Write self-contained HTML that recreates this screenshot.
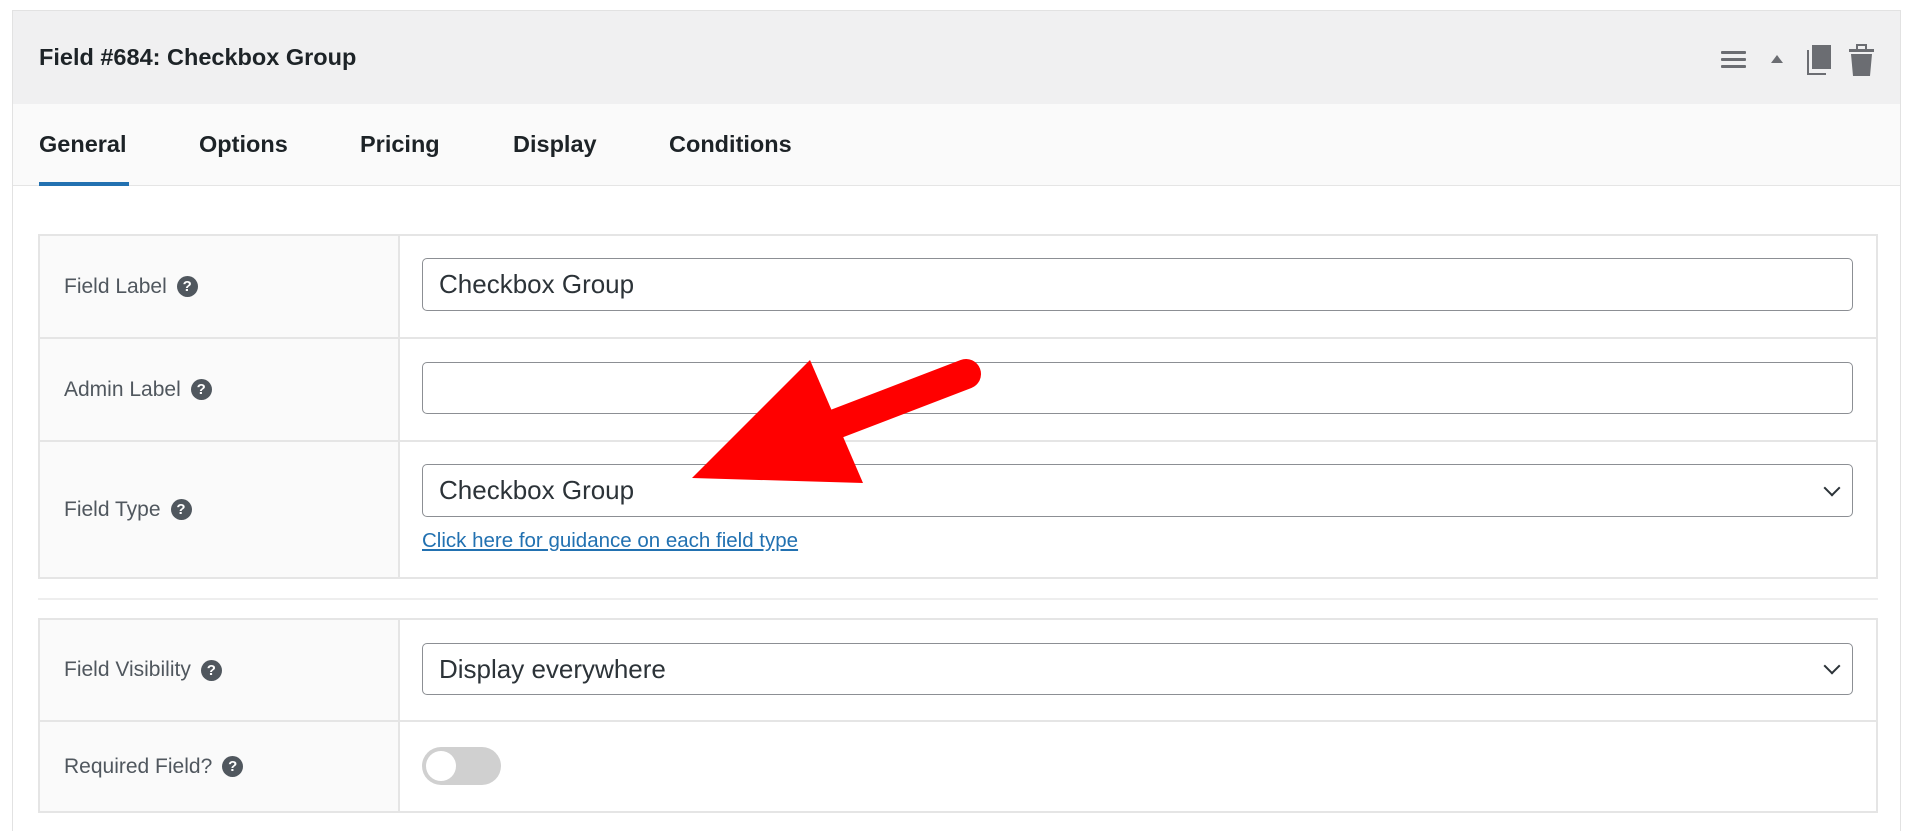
<!DOCTYPE html>
<html><head><style>
*{box-sizing:border-box;margin:0;padding:0}
html,body{width:1920px;height:831px;overflow:hidden}
body{background:#fff;font-family:"Liberation Sans",sans-serif;position:relative}
.panel{position:absolute;left:12px;top:10px;width:1889px;height:821px;border:1px solid #e2e2e2;border-bottom:none;background:#fff}
.hdr{position:absolute;left:0;top:0;width:100%;height:93px;background:#f0f0f1}
.title{position:absolute;left:26px;top:33px;font-size:23.5px;font-weight:bold;color:#1d2327}
.tabs{position:absolute;left:0;top:93px;width:100%;height:82px;background:#fafafa;border-bottom:1px solid #e5e5e5}
.tab{position:absolute;top:27px;font-size:23.5px;font-weight:bold;color:#1d2327}
.ul{position:absolute;left:26px;top:78px;width:90px;height:4px;background:#2271b1}
.tbl{position:absolute;left:38px;width:1840px;border:2px solid #e5e5e5;background:#fff}
.row{position:absolute;left:0;width:100%;border-top:2px solid #e5e5e5}
.lab{position:absolute;left:0;top:0;width:360px;height:100%;border-right:2px solid #e5e5e5;background:#fafafa;display:flex;align-items:center;padding-left:24px;font-size:21px;color:#50575e}
.q{display:inline-block;width:21px;height:21px;border-radius:50%;background:#50575e;color:#fff;font-size:15px;font-weight:bold;text-align:center;line-height:21px;margin-left:10px}
.inp{position:absolute;left:422px;width:1431px;border:1.5px solid #8c8f94;border-radius:5px;background:#fff;font-size:26px;color:#2c3338;padding-left:16px;display:flex;align-items:center}
.chev{position:absolute;right:14px;top:50%;width:12px;height:12px;border-right:2.5px solid #2c3338;border-bottom:2.5px solid #2c3338;transform:translateY(-75%) rotate(45deg)}
</style></head><body>
<div class="panel">
 <div class="hdr"><div class="title">Field #684: Checkbox Group</div>
  <svg style="position:absolute;left:1706px;top:32px" width="170" height="36" viewBox="0 0 170 36">
   <g fill="#6b6d72">
    <rect x="2" y="8" width="25" height="3" rx="1"/><rect x="2" y="15" width="25" height="3" rx="1"/><rect x="2" y="22" width="25" height="3" rx="1"/>
    <polygon points="52,20 64,20 58,12"/>
    <rect x="93" y="2" width="19" height="24"/><path d="M88 7v25h19v-2h-17v-23z"/>
    <rect x="130" y="6" width="25" height="3"/><rect x="138" y="2" width="9" height="5" fill="none" stroke="#6b6d72" stroke-width="2"/><path d="M132 11h21l-2 22h-17z"/>
   </g></svg>
 </div>
 <div class="tabs">
  <div class="tab" style="left:26px">General</div>
  <div class="tab" style="left:186px">Options</div>
  <div class="tab" style="left:347px">Pricing</div>
  <div class="tab" style="left:500px">Display</div>
  <div class="tab" style="left:656px">Conditions</div>
  <div class="ul"></div>
 </div>
</div>
<div class="tbl" style="top:234px;height:345px">
 <div class="row" style="top:0;height:101px;border-top:none"><div class="lab">Field Label<span class="q">?</span></div></div>
 <div class="row" style="top:101px;height:103px"><div class="lab">Admin Label<span class="q">?</span></div></div>
 <div class="row" style="top:204px;height:137px"><div class="lab">Field Type<span class="q">?</span></div></div>
</div>
<div class="inp" style="top:258px;height:53px">Checkbox Group</div>
<div class="inp" style="top:362px;height:52px"></div>
<div class="inp" style="top:464px;height:53px">Checkbox Group<span class="chev"></span></div>
<div style="position:absolute;left:422px;top:529px;font-size:20.5px;color:#2271b1;text-decoration:underline">Click here for guidance on each field type</div>
<div style="position:absolute;left:38px;top:598px;width:1840px;height:2px;background:#eee"></div>
<div class="tbl" style="top:618px;height:195px">
 <div class="row" style="top:0;height:100px;border-top:none"><div class="lab">Field Visibility<span class="q">?</span></div></div>
 <div class="row" style="top:100px;height:91px"><div class="lab">Required Field?<span class="q">?</span></div></div>
</div>
<div class="inp" style="top:643px;height:52px">Display everywhere<span class="chev"></span></div>
<div style="position:absolute;left:422px;top:747px;width:79px;height:38px;border-radius:19px;background:#d0d0d0"><div style="position:absolute;left:4px;top:4px;width:30px;height:30px;border-radius:50%;background:#fff"></div></div>
<svg style="position:absolute;left:0;top:0" width="1920" height="831">
 <line x1="966" y1="374" x2="820" y2="430" stroke="#f00" stroke-width="30" stroke-linecap="round"/>
 <polygon points="810,360 692,478 863,483" fill="#f00"/>
</svg>
</body></html>
